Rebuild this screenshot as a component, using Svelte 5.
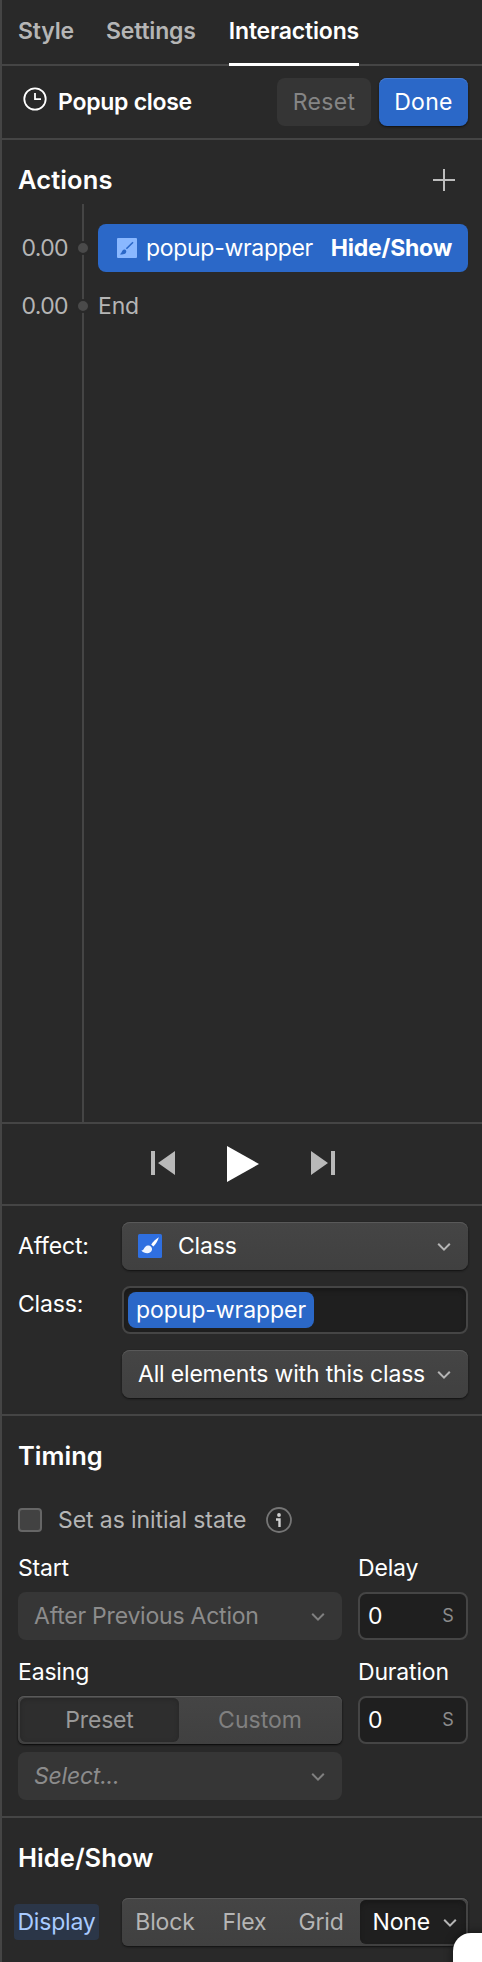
<script>
  const tabs = ['Style', 'Settings', 'Interactions'];
  let active = $state('Interactions');
  const modes = ['Block', 'Flex', 'Grid'];
</script>

{#snippet chevron()}
  <svg class="chevron" width="14" height="10" viewBox="0 0 14 10"><path d="M1.2 1.8 7 7.6l5.800-5.800" fill="none" stroke="currentColor" stroke-width="2" /></svg>
{/snippet}

<div class="panel">
  <nav class="tabs">
    {#each tabs as tab}
      <button class="tab" class:active={tab === active} onclick={() => (active = tab)}>{tab}</button>
    {/each}
  </nav>

  <header class="bar">
    <svg class="clock" width="24" height="24" viewBox="0 0 24 24" fill="none" stroke="#fff" stroke-width="1.800">
      <circle cx="12" cy="12" r="10.700" /><path d="M12 6V12.200H18" />
    </svg>
    <span class="name">Popup close</span>
    <button class="btn reset">Reset</button>
    <button class="btn done">Done</button>
  </header>

  <section class="actions">
    <div class="heading">
      <h2>Actions</h2>
      <svg width="22" height="22" viewBox="0 0 22 22" stroke="#bdbdbd" stroke-width="2"><path d="M11 0v22M0 11h22" /></svg>
    </div>
    <div class="timeline">
      <div class="row">
        <span class="time">0.00</span><i class="dot"></i>
        <div class="pill">
          <svg width="20" height="20" viewBox="0 0 20 20">
            <rect width="20" height="20" rx="1" fill="#8ab8ff" />
            <path d="M16 4.2 9.4 10.8" stroke="#2b68c8" stroke-width="1.6" fill="none" />
            <path d="M2.8 16.2C5 15.8 4.6 12 7.3 11.6c1.8-.1 2.7 2 1.5 3.5-1.300 1.500-4 1.600-6 1.100z" fill="#2b68c8" />
          </svg>
          <span class="target">popup-wrapper</span>
          <strong>Hide/Show</strong>
        </div>
      </div>
      <div class="row end"><span class="time">0.00</span><i class="dot"></i><span class="endtext">End</span></div>
    </div>
  </section>

  <div class="player">
    <svg width="24" height="24" viewBox="0 0 24 24" fill="#b9b9b9"><path d="M0 0h4v24H0zM24 0v24L7 12z" /></svg>
    <svg class="play" width="32" height="36" viewBox="0 0 32 36" fill="#fff"><path d="M0 0v36l32-18z" /></svg>
    <svg width="24" height="24" viewBox="0 0 24 24" fill="#b9b9b9"><path d="M20 0h4v24h-4zM0 0v24l17-12z" /></svg>
  </div>

  <section class="affect">
    <div class="label">Affect:</div>
    <div class="select">
      <svg width="24" height="24" viewBox="0 0 24 24">
        <rect width="24" height="24" rx="1.500" fill="#2f6fe0" />
        <path d="M20.800 3.200C18 4.800 14.800 8 13.200 10.500l2.200 2C17.800 10 20 6.500 20.800 3.200z" fill="#fff" />
        <path d="M3.300 16.500c3 .5 2.600-4.500 6.500-4.900 2.600-.1 4.600 1.900 4.200 4.200-.8 4.300-7.500 4.400-10.700.7z" fill="#eef4ff" />
      </svg>
      <span class="class-name">Class</span>{@render chevron()}
    </div>
    <div class="label high">Class:</div>
    <div class="input classes"><span class="tag">popup-wrapper</span></div>
    <div></div>
    <div class="select"><span class="all">All elements with this class</span>{@render chevron()}</div>
  </section>

  <section class="timing">
    <h2>Timing</h2>
    <div class="check">
      <i class="box"></i><span>Set as initial state</span>
      <svg width="26" height="26" viewBox="0 0 26 26">
        <circle cx="13" cy="13" r="12" fill="none" stroke="#757575" stroke-width="1.800" />
        <circle cx="13" cy="8" r="1.900" fill="#d0d0d0" /><path d="M10 12.500h3.500V20" fill="none" stroke="#d0d0d0" stroke-width="2.400" />
      </svg>
    </div>
    <div class="grid">
      <div class="lab">Start</div><div class="lab">Delay</div>
      <div class="select off"><span>After Previous Action</span>{@render chevron()}</div>
      <div class="input num"><span>0</span><small>S</small></div>
    </div>
    <div class="grid second">
      <div class="lab">Easing</div><div class="lab">Duration</div>
      <div class="segs"><span class="seg on">Preset</span><span class="seg">Custom</span></div>
      <div class="input num"><span>0</span><small>S</small></div>
    </div>
    <div class="select off easing"><span><em>Select...</em></span>{@render chevron()}</div>
  </section>

  <section class="display">
    <h2>Hide/Show</h2>
    <div class="drow">
      <span class="dlabel">Display</span>
      <div class="modes">
        {#each modes as m}<span class="mode {m.toLowerCase()}">{m}</span>{/each}
        <span class="none">None{@render chevron()}</span>
      </div>
    </div>
  </section>
  <div class="bubble"></div>
</div>

<style>
  :global(body) { margin: 0; background: #292929; }
  * { box-sizing: border-box; }
  .panel {
    position: relative; width: 482px; height: 1962px; overflow: hidden;
    background: #292929; border-left: 2px solid #454545; color: #fff;
    font: 400 23px/28px Inter, sans-serif; letter-spacing: -.18px; white-space: nowrap;
  }
  button { font: inherit; letter-spacing: inherit; border: 0; margin: 0; background: none; color: inherit; }
  h2 { margin: 0; font-size: 25.500px; line-height: 32px; font-weight: 600; letter-spacing: 0; }
  svg { display: block; flex: none; }
  .tabs { display: flex; gap: 32px; height: 66px; padding-left: 16px; border-bottom: 2px solid #454545; font-weight: 600; letter-spacing: -.17px; }
  .tab { height: 66px; padding: 0; border-bottom: 3px solid transparent; color: #b5b5b5; line-height: 61px; }
  .tab.active { margin-left: 1px; color: #fff; border-color: #fff; }
  .bar { display: flex; align-items: center; height: 74px; padding: 0 14px 0 21px; border-bottom: 2px solid #454545; }
  .clock { margin: 0 11px 6px 0; }
  .name { flex: 1; font-weight: 600; letter-spacing: -.27px; }
  .btn { height: 48px; border-radius: 8px; padding: 0; text-align: center; letter-spacing: .3px; }
  .reset { width: 94px; background: #353535; color: #858585; margin-right: 8px; }
  .done { width: 89px; background: #2b68c8; box-shadow: inset 0 1px #447ad0, 0 1px 2px #111; }
  .actions { display: flex; flex-direction: column; height: 984px; border-bottom: 2px solid #454545; }
  .heading { display: flex; align-items: center; justify-content: space-between; height: 64px; padding: 16px 27px 0 16px; }
  .heading h2 { letter-spacing: .1px; }
  .timeline { flex: 1; padding-top: 20px; background: linear-gradient(#454545, #454545) 80px 0 / 2px 100% no-repeat; }
  .row { display: flex; align-items: center; height: 48px; color: #b5b5b5; }
  .end { margin-top: 10px; }
  .time { width: 66px; text-align: right; letter-spacing: -.6px; }
  .dot { width: 14px; height: 14px; margin-left: 7.500px; border: 2px solid #292929; border-radius: 50%; background: #4a4a4a; }
  .endtext { margin-left: 8.500px; }
  .pill { display: flex; align-items: center; width: 370px; height: 48px; margin-left: 8.500px; padding: 0 16px 0 19px; border-radius: 8px; background: #2b68c8; color: #fff; }
  .target { flex: 1; margin-left: 9px; letter-spacing: -.3px; }
  strong { letter-spacing: -.22px; }
  .player { display: flex; height: 82px; padding: 27px 0 0 149px; border-bottom: 2px solid #454545; }
  .play { margin: -5px 52px 0; }
  .affect { display: grid; grid-template-columns: 104px 346px; row-gap: 16px; align-content: start; height: 210px; padding: 16px 0 0 16px; border-bottom: 2px solid #454545; }
  .label { line-height: 48px; }
  .high { line-height: 36px; }
  .select { display: flex; align-items: center; justify-content: space-between; height: 48px; padding: 0 17px 0 16px; border-radius: 8px; background: linear-gradient(#454545, #404040); box-shadow: inset 0 1px #595959, 0 1px 2px #111; }
  .chevron { color: #b5b5b5; margin-top: 2px; }
  .class-name { flex: 1; margin-left: 16px; }
  .input { height: 48px; border: 2px solid #454545; border-radius: 8px; background: #1f1f1f; }
  .classes { padding: 4px; box-shadow: inset 0 3px 4px #191919; }
  .tag { display: block; width: 186px; height: 36px; border-radius: 8px; background: #2b68c8; text-align: center; line-height: 36px; letter-spacing: -.05px; }
  .timing { height: 402px; padding: 24px 12px 0 16px; border-bottom: 2px solid #454545; }
  .check { display: flex; align-items: center; height: 28px; margin-top: 34px; color: #b5b5b5; letter-spacing: -.08px; }
  .check span { margin: 0 20px 0 16px; }
  .box { width: 24px; height: 24px; border: 2px solid #666; border-radius: 4px; background: #424242; }
  .grid { display: grid; grid-template-columns: 324px 110px; column-gap: 16px; row-gap: 10px; margin-top: 20px; }
  .second { margin-top: 18px; }
  .lab { height: 28px; }
  .off { background: #363636; color: #8c8c8c; box-shadow: none; letter-spacing: -.22px; }
  .off .chevron { color: #808080; }
  .num { display: flex; align-items: center; justify-content: space-between; padding: 0 12.500px 0 8px; }
  small { font-size: 18px; color: #8c8c8c; }
  .segs { display: grid; grid-template-columns: 159px 1fr; height: 48px; padding: 2px; border-radius: 6px; background: linear-gradient(#454545, #404040); box-shadow: inset 0 1px #595959, 0 1px 2px #080808; color: #808080; }
  .seg { line-height: 44px; text-align: center; }
  .seg:last-child { letter-spacing: 0; padding-left: 1px; }
  .seg.on { border-radius: 6px; background: #2e2e2e; box-shadow: inset 0 1px 4px #262626; color: #999; }
  .easing { width: 324px; margin-top: 8px; }
  .display { height: 144px; padding: 24px 12px 0; }
  .display h2 { margin-left: 4px; letter-spacing: .05px; }
  .drow { display: flex; align-items: center; margin-top: 24px; }
  .dlabel { width: 85px; height: 36px; margin-right: 23px; border-radius: 4px; background: #2b3648; color: #a9cbff; text-align: center; line-height: 36px; }
  .modes { display: flex; align-items: center; width: 346px; height: 48px; padding: 2px; border-radius: 6px; background: linear-gradient(#454545, #404040); box-shadow: inset 0 1px #595959, 0 1px 2px #111; color: #b5b5b5; }
  .mode { text-align: center; }
  .block { width: 82px; }
  .flex { width: 77px; }
  .mode.grid { display: block; width: 77px; margin: 0; padding-right: 1px; }
  .none { display: flex; align-items: center; justify-content: space-between; width: 106px; height: 44px; padding: 0 9px 0 12.500px; border-radius: 6px; background: #1f1f1f; box-shadow: inset 0 3px 4px #191919; color: #fff; }
  .bubble { position: absolute; left: 451px; top: 1933px; width: 60px; height: 60px; border-radius: 18px; background: #fff; box-shadow: 0 0 8px #0008; }
</style>
